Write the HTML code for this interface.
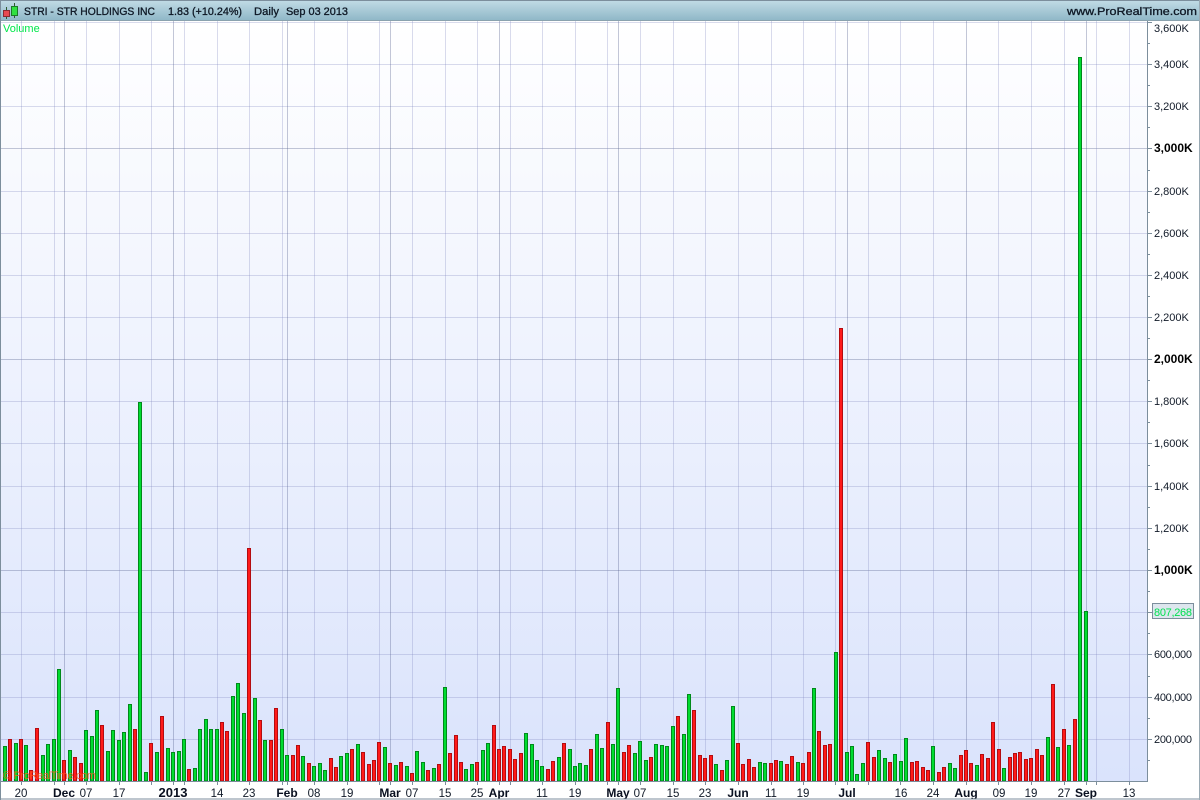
<!DOCTYPE html>
<html><head><meta charset="utf-8"><style>
html,body{margin:0;padding:0;background:#fff}
svg{display:block}
text{font-family:"Liberation Sans",Arial,sans-serif;fill:#111a28}
.y{font-size:11px}
.yb{font-size:12px;font-weight:bold;fill:#000}
.d{font-size:11.5px;text-anchor:middle}
.m{font-size:12px;font-weight:bold;text-anchor:middle;fill:#0a1020}
.t{font-size:11px;stroke:#0a1420;stroke-width:.3}
</style></head><body>
<svg width="1200" height="800" viewBox="0 0 1200 800" xmlns="http://www.w3.org/2000/svg">
<defs>
<linearGradient id="bg" x1="0" y1="0" x2="0" y2="1"><stop offset="0" stop-color="#fff"/><stop offset="1" stop-color="#dae3fc"/></linearGradient>
<linearGradient id="tb" x1="0" y1="0" x2="0" y2="1"><stop offset="0" stop-color="#c2dce6"/><stop offset="1" stop-color="#90b8c8"/></linearGradient>
</defs>
<rect width="1200" height="800" fill="#fff"/>
<rect x="1" y="21" width="1146" height="760" fill="url(#bg)"/>
<!-- horizontal grid -->
<path d="M1 22.500H1147M1 64.500H1147M1 106.500H1147M1 191.500H1147M1 233.500H1147M1 275.500H1147M1 317.500H1147M1 401.500H1147M1 443.500H1147M1 486.500H1147M1 528.500H1147M1 612.500H1147M1 654.500H1147M1 697.500H1147M1 739.500H1147" stroke="#8088c0" stroke-opacity=".3" fill="none"/>
<path d="M1 148.500H1147M1 359.500H1147M1 570.500H1147" stroke="#5a6490" stroke-opacity=".36" fill="none"/>
<!-- vertical grid -->
<path d="M21.500 21V781M54.500 21V781M86.500 21V781M119.500 21V781M151.500 21V781M184.500 21V781M217.500 21V781M249.500 21V781M282.500 21V781M314.500 21V781M347.500 21V781M379.500 21V781M412.500 21V781M445.500 21V781M477.500 21V781M510.500 21V781M542.500 21V781M575.500 21V781M607.500 21V781M640.500 21V781M673.500 21V781M705.500 21V781M738.500 21V781M771.500 21V781M803.500 21V781M835.500 21V781M868.500 21V781M900.500 21V781M933.500 21V781M998.500 21V781M1031.500 21V781M1064.500 21V781M1096.500 21V781M1129.500 21V781" stroke="#8088c0" stroke-opacity=".3" fill="none"/>
<path d="M64.500 21V781M173.500 21V781M287.500 21V781M390.500 21V781M499.500 21V781M618.500 21V781M847.500 21V781M966.500 21V781M1086.500 21V781" stroke="#5a6490" stroke-opacity=".36" fill="none"/>
<!-- green bars -->
<path fill="#00dc30" stroke="#008a1a" d="M3.500 781V746.500h3V781zM14.500 781V743.500h3V781zM24.500 781V745.500h3V781zM41.500 781V755.500h3V781zM46.500 781V744.500h3V781zM52.500 781V739.500h3V781zM57.500 781V669.500h3V781zM68.500 781V750.500h3V781zM84.500 781V730.500h3V781zM90.500 781V736.500h3V781zM95.500 781V710.500h3V781zM106.500 781V751.500h3V781zM111.500 781V730.500h3V781zM117.500 781V740.500h3V781zM122.500 781V732.500h3V781zM128.500 781V704.500h3V781zM138.500 781V402.500h3V781zM144.500 781V772.500h3V781zM155.500 781V752.500h3V781zM166.500 781V748.500h3V781zM171.500 781V752.500h3V781zM177.500 781V751.500h3V781zM182.500 781V739.500h3V781zM193.500 781V768.500h3V781zM198.500 781V729.500h3V781zM204.500 781V719.500h3V781zM209.500 781V729.500h3V781zM215.500 781V729.500h3V781zM231.500 781V696.500h3V781zM236.500 781V683.500h3V781zM242.500 781V713.500h3V781zM253.500 781V698.500h3V781zM263.500 781V740.500h3V781zM280.500 781V729.500h3V781zM285.500 781V755.500h3V781zM301.500 781V756.500h3V781zM312.500 781V766.500h3V781zM318.500 781V763.500h3V781zM323.500 781V770.500h3V781zM339.500 781V756.500h3V781zM345.500 781V753.500h3V781zM356.500 781V744.500h3V781zM383.500 781V747.500h3V781zM394.500 781V765.500h3V781zM405.500 781V766.500h3V781zM415.500 781V751.500h3V781zM421.500 781V762.500h3V781zM432.500 781V768.500h3V781zM443.500 781V687.500h3V781zM464.500 781V769.500h3V781zM470.500 781V764.500h3V781zM481.500 781V750.500h3V781zM486.500 781V743.500h3V781zM524.500 781V733.500h3V781zM530.500 781V744.500h3V781zM535.500 781V760.500h3V781zM540.500 781V766.500h3V781zM557.500 781V757.500h3V781zM568.500 781V749.500h3V781zM573.500 781V766.500h3V781zM578.500 781V763.500h3V781zM584.500 781V765.500h3V781zM595.500 781V734.500h3V781zM600.500 781V748.500h3V781zM611.500 781V744.500h3V781zM616.500 781V688.500h3V781zM633.500 781V753.500h3V781zM638.500 781V741.500h3V781zM644.500 781V760.500h3V781zM654.500 781V744.500h3V781zM660.500 781V745.500h3V781zM665.500 781V746.500h3V781zM671.500 781V726.500h3V781zM682.500 781V734.500h3V781zM687.500 781V694.500h3V781zM714.500 781V764.500h3V781zM725.500 781V760.500h3V781zM731.500 781V706.500h3V781zM758.500 781V762.500h3V781zM763.500 781V763.500h3V781zM779.500 781V761.500h3V781zM796.500 781V762.500h3V781zM812.500 781V688.500h3V781zM834.500 781V652.500h3V781zM845.500 781V752.500h3V781zM850.500 781V746.500h3V781zM855.500 781V774.500h3V781zM861.500 781V763.500h3V781zM877.500 781V750.500h3V781zM883.500 781V758.500h3V781zM893.500 781V754.500h3V781zM899.500 781V761.500h3V781zM904.500 781V738.500h3V781zM931.500 781V746.500h3V781zM948.500 781V763.500h3V781zM953.500 781V768.500h3V781zM975.500 781V765.500h3V781zM1002.500 781V768.500h3V781zM1046.500 781V737.500h3V781zM1056.500 781V747.500h3V781zM1067.500 781V745.500h3V781zM1078.500 781V57.500h3V781zM1084.500 781V611.500h3V781z"/>
<!-- red bars -->
<path fill="#ff1a1a" stroke="#b40c10" d="M8.500 781V739.500h3V781zM19.500 781V739.500h3V781zM29.500 781V770.500h3V781zM35.500 781V728.500h3V781zM62.500 781V760.500h3V781zM73.500 781V757.500h3V781zM79.500 781V763.500h3V781zM100.500 781V725.500h3V781zM133.500 781V729.500h3V781zM149.500 781V743.500h3V781zM160.500 781V716.500h3V781zM187.500 781V769.500h3V781zM220.500 781V722.500h3V781zM225.500 781V731.500h3V781zM247.500 781V548.500h3V781zM258.500 781V720.500h3V781zM269.500 781V740.500h3V781zM274.500 781V708.500h3V781zM291.500 781V755.500h3V781zM296.500 781V745.500h3V781zM307.500 781V763.500h3V781zM329.500 781V758.500h3V781zM334.500 781V767.500h3V781zM350.500 781V749.500h3V781zM361.500 781V752.500h3V781zM367.500 781V764.500h3V781zM372.500 781V760.500h3V781zM377.500 781V742.500h3V781zM388.500 781V763.500h3V781zM399.500 781V762.500h3V781zM410.500 781V773.500h3V781zM426.500 781V770.500h3V781zM437.500 781V764.500h3V781zM448.500 781V753.500h3V781zM454.500 781V735.500h3V781zM459.500 781V762.500h3V781zM475.500 781V762.500h3V781zM492.500 781V725.500h3V781zM497.500 781V749.500h3V781zM502.500 781V746.500h3V781zM508.500 781V749.500h3V781zM513.500 781V759.500h3V781zM519.500 781V753.500h3V781zM546.500 781V769.500h3V781zM551.500 781V761.500h3V781zM562.500 781V743.500h3V781zM589.500 781V749.500h3V781zM606.500 781V722.500h3V781zM622.500 781V752.500h3V781zM627.500 781V745.500h3V781zM649.500 781V757.500h3V781zM676.500 781V716.500h3V781zM692.500 781V710.500h3V781zM698.500 781V755.500h3V781zM703.500 781V758.500h3V781zM709.500 781V755.500h3V781zM720.500 781V770.500h3V781zM736.500 781V743.500h3V781zM741.500 781V764.500h3V781zM747.500 781V759.500h3V781zM752.500 781V767.500h3V781zM769.500 781V763.500h3V781zM774.500 781V760.500h3V781zM785.500 781V764.500h3V781zM790.500 781V756.500h3V781zM801.500 781V763.500h3V781zM807.500 781V752.500h3V781zM817.500 781V731.500h3V781zM823.500 781V745.500h3V781zM828.500 781V744.500h3V781zM839.500 781V328.500h3V781zM866.500 781V742.500h3V781zM872.500 781V757.500h3V781zM888.500 781V762.500h3V781zM910.500 781V762.500h3V781zM915.500 781V761.500h3V781zM921.500 781V767.500h3V781zM926.500 781V770.500h3V781zM937.500 781V772.500h3V781zM942.500 781V767.500h3V781zM959.500 781V755.500h3V781zM964.500 781V750.500h3V781zM969.500 781V763.500h3V781zM980.500 781V754.500h3V781zM986.500 781V758.500h3V781zM991.500 781V722.500h3V781zM997.500 781V749.500h3V781zM1008.500 781V757.500h3V781zM1013.500 781V753.500h3V781zM1018.500 781V752.500h3V781zM1024.500 781V759.500h3V781zM1029.500 781V758.500h3V781zM1035.500 781V749.500h3V781zM1040.500 781V755.500h3V781zM1051.500 781V684.500h3V781zM1062.500 781V729.500h3V781zM1073.500 781V719.500h3V781z"/>
<!-- watermark -->
<text x="3" y="779" font-size="11" style="fill:#ff5a1e;fill-opacity:.85" textLength="93">© ProRealTime.com</text>
<text x="3" y="32" font-size="11" style="fill:#00e64a">Volume</text>
<!-- axes -->
<path d="M0 781.500H1147.500M1147.500 21V782" stroke="#7c8e9c" fill="none"/>
<path d="M21.500 782v3M54.500 782v3M64.500 782v3M86.500 782v3M119.500 782v3M151.500 782v3M173.500 782v3M184.500 782v3M217.500 782v3M249.500 782v3M282.500 782v3M287.500 782v3M314.500 782v3M347.500 782v3M379.500 782v3M390.500 782v3M412.500 782v3M445.500 782v3M477.500 782v3M499.500 782v3M510.500 782v3M542.500 782v3M575.500 782v3M607.500 782v3M618.500 782v3M640.500 782v3M673.500 782v3M705.500 782v3M738.500 782v3M771.500 782v3M803.500 782v3M835.500 782v3M847.500 782v3M868.500 782v3M900.500 782v3M933.500 782v3M966.500 782v3M998.500 782v3M1031.500 782v3M1064.500 782v3M1086.500 782v3M1096.500 782v3M1129.500 782v3" stroke="#7c8e9c" fill="none"/>
<path d="M1148 22.500h4M1148 43.500h2M1148 64.500h4M1148 85.500h2M1148 106.500h4M1148 127.500h2M1148 148.500h4M1148 170.500h2M1148 191.500h4M1148 212.500h2M1148 233.500h4M1148 254.500h2M1148 275.500h4M1148 296.500h2M1148 317.500h4M1148 338.500h2M1148 359.500h4M1148 380.500h2M1148 401.500h4M1148 422.500h2M1148 443.500h4M1148 465.500h2M1148 486.500h4M1148 507.500h2M1148 528.500h4M1148 549.500h2M1148 570.500h4M1148 591.500h2M1148 612.500h4M1148 633.500h2M1148 654.500h4M1148 676.500h2M1148 697.500h4M1148 718.500h2M1148 739.500h4M1148 760.500h2" stroke="#7c8e9c" fill="none"/>
<!-- y labels -->
<g>
<text class="y" x="1154" y="32">3,600K</text>
<text class="y" x="1154" y="68">3,400K</text>
<text class="y" x="1154" y="110">3,200K</text>
<text class="yb" x="1154" y="152">3,000K</text>
<text class="y" x="1154" y="195">2,800K</text>
<text class="y" x="1154" y="237">2,600K</text>
<text class="y" x="1154" y="279">2,400K</text>
<text class="y" x="1154" y="321">2,200K</text>
<text class="yb" x="1154" y="363">2,000K</text>
<text class="y" x="1154" y="405">1,800K</text>
<text class="y" x="1154" y="447">1,600K</text>
<text class="y" x="1154" y="490">1,400K</text>
<text class="y" x="1154" y="532">1,200K</text>
<text class="yb" x="1154" y="574">1,000K</text>
<text class="y" x="1154" y="658" textLength="38">600,000</text>
<text class="y" x="1154" y="701" textLength="38">400,000</text>
<text class="y" x="1154" y="743" textLength="38">200,000</text>
</g>
<rect x="1152.500" y="603.500" width="41" height="15" fill="#dde6ee" stroke="#7c8e9c"/>
<text x="1154" y="616" font-size="11" textLength="38" style="fill:#00e050">807,268</text>
<!-- x labels -->
<text class="d" x="21" y="797">20</text>
<text class="m" x="64" y="797">Dec</text>
<text class="d" x="86" y="797">07</text>
<text class="d" x="119" y="797">17</text>
<text class="m" x="173" y="797" style="font-size:13px">2013</text>
<text class="d" x="217" y="797">14</text>
<text class="d" x="249" y="797">23</text>
<text class="m" x="287" y="797">Feb</text>
<text class="d" x="314" y="797">08</text>
<text class="d" x="347" y="797">19</text>
<text class="m" x="390" y="797">Mar</text>
<text class="d" x="412" y="797">07</text>
<text class="d" x="445" y="797">15</text>
<text class="d" x="477" y="797">25</text>
<text class="m" x="499" y="797">Apr</text>
<text class="d" x="542" y="797">11</text>
<text class="d" x="575" y="797">19</text>
<text class="m" x="618" y="797">May</text>
<text class="d" x="640" y="797">07</text>
<text class="d" x="673" y="797">15</text>
<text class="d" x="705" y="797">23</text>
<text class="m" x="738" y="797">Jun</text>
<text class="d" x="771" y="797">11</text>
<text class="d" x="803" y="797">19</text>
<text class="m" x="847" y="797">Jul</text>
<text class="d" x="901" y="797">16</text>
<text class="d" x="933" y="797">24</text>
<text class="m" x="966" y="797">Aug</text>
<text class="d" x="999" y="797">09</text>
<text class="d" x="1031" y="797">19</text>
<text class="d" x="1064" y="797">27</text>
<text class="m" x="1086" y="797">Sep</text>
<text class="d" x="1129" y="797">13</text>
<!-- title bar -->
<rect x="0" y="0" width="1200" height="20" fill="url(#tb)"/>
<path d="M0 .5H1200" stroke="#7c8e9c"/>
<path d="M0 20.500H1200" stroke="#8aa2ae"/>
<path d="M6.500 7v12M14.500 3v15" stroke="#2f5a30" fill="none"/>
<rect x="3.500" y="10.500" width="6" height="6" fill="#e84a50" stroke="#8a2a30"/>
<rect x="11.500" y="6.500" width="6" height="9" fill="#30e040" stroke="#1c7a28"/>
<text class="t" x="24" y="15" textLength="131" lengthAdjust="spacingAndGlyphs">STRI - STR HOLDINGS INC</text>
<text class="t" x="168" y="15" textLength="74" lengthAdjust="spacingAndGlyphs">1.83 (+10.24%)</text>
<text class="t" x="254" y="15" textLength="25" lengthAdjust="spacingAndGlyphs">Daily</text>
<text class="t" x="286" y="15" textLength="62" lengthAdjust="spacingAndGlyphs">Sep 03 2013</text>
<text class="t" x="1067" y="15" textLength="130" lengthAdjust="spacingAndGlyphs">www.ProRealTime.com</text>
<!-- frame -->
<path d="M.5 0V800M0 799H1200" stroke="#7c8e9c" stroke-width="1" fill="none"/>
<path d="M1199.500 0V800" stroke="#9aaab4" fill="none"/>
</svg>
</body></html>
